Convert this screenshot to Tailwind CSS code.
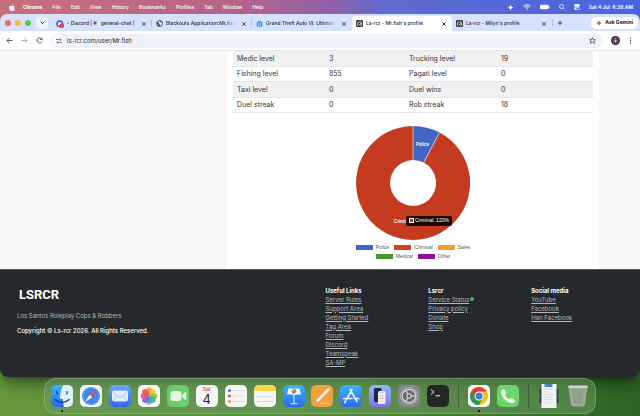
<!DOCTYPE html>
<html lang="en">
<head>
    <meta charset="UTF-8">
    <meta name="viewport" content="width=device-width, initial-scale=1.0">
    <title>Ls-rcr - Mr.fish's profile</title>
    <script src="https://cdn.jsdelivr.net/npm/@tailwindcss/browser@4"></script>
</head>
<body class="min-h-screen bg-linear-to-r from-[#66983a] via-[#4f8c35] to-[#2c6423] font-['Inter',sans-serif] text-[6px] leading-[9px] text-gray-800">

    <!-- Menu bar -->
    <div class="bg-[linear-gradient(80deg,#c8707a_0%,#b4648a_38%,#9061a8_52%,#606bcd_60%,#4a64e4_100%)]">
        <header class="flex h-[14px] items-center justify-between pl-[9px] pr-[7px] text-[5px] text-white">
            <nav class="flex items-center gap-[10px] font-medium">
                <svg class="mr-[-2px] h-[7px] w-[6px]" viewBox="0 0 12 14" fill="currentColor"><path d="M8.800 0c.1 1.500-1.200 3-2.700 3C5.900 1.600 7.300.1 8.800 0zM11.500 10.300c-.8 1.900-1.800 3.400-3 3.400-.9 0-1.200-.5-2.300-.5s-1.400.5-2.300.5C2.200 13.700.2 10.600.2 7.700c0-2.600 1.600-4 3.300-4 1 0 1.900.7 2.600.7.6 0 1.600-.7 2.900-.7.9 0 1.900.5 2.500 1.300-2.200 1.300-1.900 4.300 0 5.300z"/></svg>
                <button class="font-bold">Chrome</button>
                <button>File</button>
                <button>Edit</button>
                <button>View</button>
                <button>History</button>
                <button>Bookmarks</button>
                <button>Profiles</button>
                <button>Tab</button>
                <button>Window</button>
                <button>Help</button>
            </nav>
            <div class="flex items-center gap-[9px] font-semibold">
                <svg class="size-[7px]" viewBox="0 0 14 14" fill="currentColor"><path d="M7 1c.8 3.800 2 5 6 6-4 1-5.200 2.200-6 6-.8-3.800-2-5-6-6 4-1 5.200-2.200 6-6z"/></svg>
                <svg class="h-[6px] w-[8px]" viewBox="0 0 16 12" fill="none" stroke="currentColor" stroke-width="2"><path d="M1 4.500c4-4 10-4 14 0M3.700 7.300c2.500-2.500 6.100-2.500 8.600 0"/><path d="M6 9.500q2-1.600 4 0L8 11.500z" fill="currentColor" stroke="none"/></svg>
                <svg class="h-[6px] w-[10px]" viewBox="0 0 20 12"><rect x="0" y="1.500" width="17.500" height="9" rx="2.500" fill="#fff"/><path d="M18.500 4.500v3" stroke="#fff" stroke-width="1.500"/></svg>
                <svg class="size-[6px]" viewBox="0 0 12 12" fill="none" stroke="currentColor" stroke-width="1.500"><circle cx="5" cy="5" r="4"/><path d="M8 8l3.500 3.500"/></svg>
                <svg class="size-[6px]" viewBox="0 0 12 12" fill="none" stroke="currentColor" stroke-width="1.300"><rect x=".7" y=".7" width="10.600" height="4.300" rx="2.100" fill="currentColor"/><rect x=".7" y="7" width="10.600" height="4.300" rx="2.100"/><circle cx="3" cy="9.100" r="1.300" fill="currentColor"/></svg>
                <span class="whitespace-pre">Sat 4 Jul  8:26 AM</span>
            </div>
        </header>

        <!-- Tab strip -->
        <div class="flex h-[17px] items-center rounded-t-[7px] bg-[#d6e2fb]">
            <div class="flex w-[52px] shrink-0 items-center gap-1 pl-[5px]">
                <span class="size-[6px] rounded-full bg-[#ee6a5f]"></span>
                <span class="size-[6px] rounded-full bg-[#f0bd3e]"></span>
                <span class="size-[6px] rounded-full bg-[#5cc455]"></span>
                <button class="ml-px grid size-[12px] place-items-center rounded-[4px] bg-[#eef3fd]" aria-label="Search tabs">
                    <svg class="size-[5px]" viewBox="0 0 10 10" fill="none" stroke="#1f2937" stroke-width="2"><path d="M1.500 3.500L5 7l3.500-3.500"/></svg>
                </button>
            </div>
            <div class="grid h-full min-w-0 flex-1 grid-cols-5 items-end text-[5px] font-medium">
                <div class="flex h-[15px] min-w-0 items-center gap-[3px] pl-[4px]">
                    <svg class="size-[8px] shrink-0" viewBox="0 0 16 16"><circle cx="7.500" cy="7.500" r="7.200" fill="#4a5ce8"/><path d="M3.500 10c.2-3 1-5 2-5.500h4c1 .5 1.800 2.500 2 5.500-2 1.600-6 1.600-8 0z" fill="#fff"/><circle cx="11.500" cy="11.300" r="4.500" fill="#d8232f"/><path d="M11.500 9v4.500" stroke="#fff" stroke-width="1.200"/></svg>
                    <span class="flex min-w-0 flex-1 items-center overflow-hidden whitespace-nowrap">- Discord | #<i class="size-[4px] shrink-0 rounded-full bg-[#f3ece6]"></i>general-chat |</span>
                    <button class="ml-[2px] shrink-0" aria-label="Close tab"><svg class="size-[6px]" viewBox="0 0 12 12" stroke="#374151" stroke-width="1.800"><path d="M2.500 2.500l7 7M9.500 2.500l-7 7"/></svg></button>
                    <span class="ml-px h-[7px] w-px bg-[#a9c1f0]"></span>
                </div>
                <div class="flex h-[15px] min-w-0 items-center gap-[3px] pl-[4px]">
                    <svg class="size-[7px] shrink-0" viewBox="0 0 14 14"><circle cx="7" cy="7" r="6" fill="none" stroke="#44474d" stroke-width="1.700"/><path d="M2 4c2 2 4 0 4 3s3 1 2 5l-3 .5C3 10 4 8 1.500 7zM7 1.500c0 2 1 3 3 2.500s1 2 3 3V5L10 1.500z" fill="#44474d"/></svg>
                    <span class="min-w-0 flex-1 overflow-hidden whitespace-nowrap mask-r-from-85%">Blackouts Application:Mr.fish</span>
                    <button class="ml-[2px] shrink-0" aria-label="Close tab"><svg class="size-[6px]" viewBox="0 0 12 12" stroke="#374151" stroke-width="1.800"><path d="M2.500 2.500l7 7M9.500 2.500l-7 7"/></svg></button>
                    <span class="ml-px h-[7px] w-px bg-[#a9c1f0]"></span>
                </div>
                <div class="flex h-[15px] min-w-0 items-center gap-[3px] pl-[4px] pr-[5px]">
                    <svg class="size-[7px] shrink-0" viewBox="0 0 14 14"><path d="M4.500 4V2.500h5V4" fill="none" stroke="#3a7fc4" stroke-width="1.400"/><path d="M1.500 4h11v7.500a2 2 0 0 1-2 2h-7a2 2 0 0 1-2-2z" fill="#3c93dc"/><path d="M4.500 6.500h2v2h-2zM7.500 6.500h2v2h-2zM4.500 9.300h2v2h-2zM7.500 9.300h2v2h-2z" fill="#e8f4ff"/></svg>
                    <span class="min-w-0 flex-1 overflow-hidden whitespace-nowrap mask-r-from-85%">Grand Theft Auto VI: Ultimate</span>
                    <button class="ml-[2px] shrink-0" aria-label="Close tab"><svg class="size-[6px]" viewBox="0 0 12 12" stroke="#374151" stroke-width="1.800"><path d="M2.500 2.500l7 7M9.500 2.500l-7 7"/></svg></button>
                </div>
                <div class="flex h-[15px] min-w-0 items-center gap-[3px] rounded-t-[4px] bg-white pl-[4px] pr-[5px]">
                    <svg class="size-[7px] shrink-0" viewBox="0 0 14 14"><rect width="14" height="14" rx="2.500" fill="#3b3e41"/><path d="M3 11V5.500L9.500 3M5.500 11L11 5v5.500H8" fill="none" stroke="#e8ebe8" stroke-width="1.600"/></svg>
                    <span class="min-w-0 flex-1 overflow-hidden whitespace-nowrap">Ls-rcr - Mr.fish's profile</span>
                    <button class="ml-[2px] shrink-0" aria-label="Close tab"><svg class="size-[6px]" viewBox="0 0 12 12" stroke="#1f2937" stroke-width="1.800"><path d="M2.500 2.500l7 7M9.500 2.500l-7 7"/></svg></button>
                </div>
                <div class="flex h-[15px] min-w-0 items-center gap-[3px] pl-[4px] pr-[5px]">
                    <svg class="size-[7px] shrink-0" viewBox="0 0 14 14"><rect width="14" height="14" rx="2.500" fill="#3b3e41"/><path d="M3 11V5.500L9.500 3M5.500 11L11 5v5.500H8" fill="none" stroke="#e8ebe8" stroke-width="1.600"/></svg>
                    <span class="min-w-0 flex-1 overflow-hidden whitespace-nowrap">Ls-rcr - Milyn's profile</span>
                    <button class="ml-[2px] shrink-0" aria-label="Close tab"><svg class="size-[6px]" viewBox="0 0 12 12" stroke="#374151" stroke-width="1.800"><path d="M2.500 2.500l7 7M9.500 2.500l-7 7"/></svg></button>
                </div>
            </div>
            <div class="flex w-[88px] shrink-0 items-center justify-between pr-[2px]">
                <div class="flex items-center gap-1">
                    <span class="h-[7px] w-px bg-[#a9c1f0]"></span>
                    <button aria-label="New tab"><svg class="block size-[6px]" viewBox="0 0 12 12" stroke="#374151" stroke-width="1.800"><path d="M6 1.500v9M1.500 6h9"/></svg></button>
                </div>
                <button class="flex h-[12px] items-center gap-[3px] rounded-[5px] bg-white px-[5px] text-[5px] font-bold text-gray-900">
                    <svg class="size-[6px]" viewBox="0 0 12 12"><path d="M6 0c.7 3 2 4.500 6 6H6z" fill="#4285f4"/><path d="M12 6c-4 1.500-5.300 3-6 6V6z" fill="#4285f4"/><path d="M6 12C5.300 9 4 7.500 0 6h6z" fill="#34a853"/><path d="M0 6c4-1.500 5.300-3 6-6v6z" fill="#ea4335"/><path d="M0 6l3-1.500L5 6 3 7.500z" fill="#fbbc04"/></svg>
                    Ask Gemini
                </button>
            </div>
        </div>
    </div>

    <!-- Toolbar -->
    <div class="flex h-[20px] items-center gap-[8px] border-b border-gray-200 bg-white pl-[6px] pr-[7px]">
        <button aria-label="Back"><svg class="block size-[7px]" viewBox="0 0 14 14" fill="none" stroke="#374151" stroke-width="1.700"><path d="M13 7H2M7 2L2 7l5 5"/></svg></button>
        <button aria-label="Forward"><svg class="block size-[7px]" viewBox="0 0 14 14" fill="none" stroke="#a3a7ad" stroke-width="1.700"><path d="M1 7h11M7 2l5 5-5 5"/></svg></button>
        <button aria-label="Reload"><svg class="block size-[7px]" viewBox="0 0 14 14" fill="none" stroke="#374151" stroke-width="1.700"><path d="M12 8.500A5.200 5.200 0 1 1 11 3.500M12 1v4H8"/></svg></button>
        <div class="flex h-[14px] flex-1 items-center gap-[3px] rounded-full bg-[#edf1fa] pl-[2px] pr-[7px]">
            <span class="grid size-[11px] place-items-center rounded-full bg-white">
                <svg class="size-[6px]" viewBox="0 0 12 12" fill="none" stroke="#374151" stroke-width="1.500"><path d="M0 3h5M7 9h5"/><circle cx="8.500" cy="3" r="1.700"/><circle cx="3.500" cy="9" r="1.700"/></svg>
            </span>
            <input type="text" value="ls-rcr.com/user/Mr.fish" aria-label="Address" class="min-w-0 flex-1 bg-transparent text-[6px] text-gray-800 outline-none">
            <button aria-label="Bookmark"><svg class="block size-[7px]" viewBox="0 0 14 14" fill="none" stroke="#374151" stroke-width="1.500"><path d="M7 1.200l1.700 3.900 4.300.4-3.200 2.800.9 4.200L7 10.300l-3.700 2.200.9-4.200L1 5.500l4.300-.4z"/></svg></button>
        </div>
        <button aria-label="Profile"><svg class="block size-[9px]" viewBox="0 0 18 18"><circle cx="9" cy="9" r="9" fill="#35305e"/><circle cx="9" cy="9" r="5.500" fill="#c98a86"/><path d="M3.500 5h4l1.500 3 1.500-3h4l-2 9H5.500z" fill="#6b3144"/><path d="M7 8h4l-1 5H8z" fill="#e8c8c0"/></svg></button>
        <button aria-label="Menu"><svg class="block h-[7px] w-[5px]" viewBox="0 0 10 14" fill="#374151"><circle cx="5" cy="2" r="1.300"/><circle cx="5" cy="7" r="1.300"/><circle cx="5" cy="12" r="1.300"/></svg></button>
    </div>

    <!-- Profile page -->
    <main class="grid grid-cols-[227px_1fr_41px] bg-[#f8f8f8]">
        <section class="col-start-2 bg-white px-[6px] pb-[8px]">
            <table class="w-full table-fixed border-collapse text-left text-[7px] leading-[9px] text-[#30343a]">
                <colgroup><col class="w-[92px]"><col class="w-[80px]"><col class="w-[92px]"><col></colgroup>
                <tbody>
                    <tr class="h-[15px] border-b border-gray-200 bg-[#f1f1f1]">
                        <th class="pl-1 font-normal" scope="row">Medic level</th><td class="pl-1">3</td>
                        <th class="pl-1 font-normal" scope="row">Trucking level</th><td class="pl-1">19</td>
                    </tr>
                    <tr class="h-[15px] border-b border-gray-200">
                        <th class="pl-1 font-normal" scope="row">Fishing level</th><td class="pl-1">855</td>
                        <th class="pl-1 font-normal" scope="row">Pagati level</th><td class="pl-1">0</td>
                    </tr>
                    <tr class="h-[16px] border-b border-gray-200 bg-[#f1f1f1]">
                        <th class="pl-1 font-normal" scope="row">Taxi level</th><td class="pl-1">0</td>
                        <th class="pl-1 font-normal" scope="row">Duel wins</th><td class="pl-1">0</td>
                    </tr>
                    <tr class="h-[15px] border-b border-gray-200">
                        <th class="pl-1 font-normal" scope="row">Duel streak</th><td class="pl-1">0</td>
                        <th class="pl-1 font-normal" scope="row">Rob streak</th><td class="pl-1">18</td>
                    </tr>
                </tbody>
            </table>

            <!-- Job chart -->
            <div class="relative mx-auto mt-[13px] w-[114px] font-['Liberation_Sans',sans-serif] text-[5px] leading-[9px]">
                <svg class="block size-[114px]" viewBox="-57 -57 114 114">
                    <path d="M26.500-50.500A57 57 0 1 1 0-57V-23A23 23 0 1 0 10.700-20.400z" fill="#c53b1f"/>
                    <path d="M0-57A57 57 0 0 1 26.500-50.500L10.700-20.400A23 23 0 0 0 0-23z" fill="#4166c5"/>
                    <path d="M0-57V-23M26.500-50.500L10.700-20.400" stroke="#e3d3d8" stroke-width=".8"/>
                    <g fill="#fff" stroke="#fff" stroke-width=".1" font-size="5" text-anchor="middle">
                        <text x="9.500" y="-37">Police</text>
                        <text x="-10" y="40">Criminal</text>
                    </g>
                </svg>
                <div class="absolute left-[50px] top-[90px] flex h-[10px] items-center gap-px whitespace-nowrap rounded-[2px] bg-[#1a0805] px-[3px] text-white">
                    <span class="size-[5px] border border-white bg-[#c53b1f]"></span>Criminal: 120%
                </div>
            </div>
            <ul class="mx-auto mt-[3px] flex w-[124px] flex-wrap justify-center gap-x-[5px] font-['Liberation_Sans',sans-serif] text-[5px] leading-[9px] text-[#555]">
                <li class="flex items-center gap-[3px]"><span class="h-[5px] w-[17px] bg-[#4166c5]"></span>Police</li>
                <li class="flex items-center gap-[3px]"><span class="h-[5px] w-[17px] bg-[#cc4528]"></span>Criminal</li>
                <li class="flex items-center gap-[3px]"><span class="h-[5px] w-[17px] bg-[#ef9f38]"></span>Sales</li>
                <li class="flex items-center gap-[3px]"><span class="h-[5px] w-[17px] bg-[#44962d]"></span>Medical</li>
                <li class="flex items-center gap-[3px]"><span class="h-[5px] w-[17px] bg-[#8c1596]"></span>Other</li>
            </ul>
        </section>
    </main>

    <!-- Site footer -->
    <footer class="grid grid-cols-[3fr_1fr_1fr_1fr] rounded-b-[8px] border-t border-[#50555a] bg-[#25292e] pb-[10px] pl-[17px] pr-[6px] pt-[16px] text-[#b4b7ba] shadow-lg shadow-black/40">
        <div>
            <div class="pl-[2px] pt-[2px] font-['Roboto',sans-serif] text-[13px] font-bold leading-[14px] text-white">LSRCR</div>
            <p class="mt-[9px]">Los Santos Roleplay Cops &amp; Robbers</p>
            <p class="mt-[6px] font-medium text-white">Copyright © Ls-rcr 2026. All Rights Reserved.</p>
        </div>
        <div class="flex flex-col items-start">
            <h2 class="font-bold text-white">Useful Links</h2>
            <a href="#" class="underline">Server Rules</a>
            <a href="#" class="underline">Support Area</a>
            <a href="#" class="underline">Getting Started</a>
            <a href="#" class="underline">Tag Area</a>
            <a href="#" class="underline">Forum</a>
            <a href="#" class="underline">Discord</a>
            <a href="#" class="underline">Teamspeak</a>
            <a href="#" class="underline">SA-MP</a>
        </div>
        <div class="flex flex-col items-start">
            <h2 class="font-bold text-white">Lsrcr</h2>
            <a href="#" class="flex items-center gap-px underline">Service Status <span class="size-[4px] rounded-full bg-[#48b461]"></span></a>
            <a href="#" class="underline">Privacy policy</a>
            <a href="#" class="underline">Donate</a>
            <a href="#" class="underline">Shop</a>
        </div>
        <div class="flex flex-col items-start">
            <h2 class="font-bold text-white">Social media</h2>
            <a href="#" class="underline">YouTube</a>
            <a href="#" class="underline">Facebook</a>
            <a href="#" class="underline">Han Facebook</a>
        </div>
    </footer>

    <!-- Dock -->
    <div class="mx-auto mt-px flex h-[36px] max-w-[552px] items-center justify-between rounded-[12px] border border-white/20 bg-[#6f9a68]/50 px-[6px]">
        <button class="relative" aria-label="Finder">
            <svg class="block size-[22px]" viewBox="0 0 44 44"><defs><linearGradient id="sky" x2="0" y2="1"><stop stop-color="#38b4fb"/><stop offset="1" stop-color="#2a6af0"/></linearGradient></defs><rect width="44" height="44" rx="10" fill="url(#sky)"/><path d="M25 0h9a10 10 0 0 1 10 10v24a10 10 0 0 1-10 10h-8c-1-5-2-10-2-16h-6C18 17 20 8 25 0z" fill="#dff0fc"/><path d="M12 13v5M32 13v5M8 29c8 8 20 8 28 0" fill="none" stroke="#15375e" stroke-width="2.400" stroke-linecap="round"/></svg>
            <span class="absolute -bottom-[5px] left-[10px] size-[2px] rounded-full bg-black"></span>
        </button>
        <button aria-label="Safari">
            <svg class="block size-[22px]" viewBox="0 0 44 44"><rect width="44" height="44" rx="10" fill="#f1f4f7"/><circle cx="22" cy="22" r="18" fill="#3f8ae8"/><circle cx="22" cy="22" r="15.500" fill="none" stroke="#a9d3fb" stroke-width="2" stroke-dasharray="1 3"/><path d="M34 10L24.500 24.500l-5-5z" fill="#f0453a"/><path d="M10 34l9.500-14.500 5 5z" fill="#f4f6f8"/></svg>
        </button>
        <button aria-label="Mail">
            <svg class="block size-[22px]" viewBox="0 0 44 44"><defs><linearGradient id="mail" x2="0" y2="1"><stop stop-color="#6aa8f6"/><stop offset="1" stop-color="#3168ee"/></linearGradient></defs><rect width="44" height="44" rx="10" fill="url(#mail)"/><rect x="6" y="11" width="32" height="22" rx="4" fill="#e4eefb"/><path d="M7 13l13 11q2 1.500 4 0l13-11M7 32l10-10M37 32L27 22" fill="none" stroke="#8fb2e0" stroke-width="1.600"/></svg>
        </button>
        <button aria-label="Photos">
            <svg class="block size-[22px]" viewBox="0 0 44 44"><rect width="44" height="44" rx="10" fill="#f6f6f5"/><g fill-opacity=".9"><ellipse cx="22" cy="13" rx="6" ry="8" fill="#f49b2c"/><ellipse cx="22" cy="13" rx="6" ry="8" fill="#e8cf35" transform="rotate(45 22 22)"/><ellipse cx="22" cy="13" rx="6" ry="8" fill="#9cc53f" transform="rotate(90 22 22)"/><ellipse cx="22" cy="13" rx="6" ry="8" fill="#4fb583" transform="rotate(135 22 22)"/><ellipse cx="22" cy="13" rx="6" ry="8" fill="#4c9de0" transform="rotate(180 22 22)"/><ellipse cx="22" cy="13" rx="6" ry="8" fill="#7767c4" transform="rotate(225 22 22)"/><ellipse cx="22" cy="13" rx="6" ry="8" fill="#c65da8" transform="rotate(270 22 22)"/><ellipse cx="22" cy="13" rx="6" ry="8" fill="#ea5546" transform="rotate(315 22 22)"/></g></svg>
        </button>
        <button aria-label="FaceTime">
            <svg class="block size-[22px]" viewBox="0 0 44 44"><rect width="44" height="44" rx="10" fill="#68cf68"/><rect x="7" y="12" width="22" height="20" rx="5" fill="#e4f7e2"/><path d="M31 19l6-5q1.500-.8 1.500 1v14q0 1.800-1.500 1l-6-5z" fill="#e4f7e2"/></svg>
        </button>
        <button class="flex size-[22px] flex-col items-center rounded-[5px] bg-[#f6f6f6] pt-[2px]">
            <span class="text-[5px] font-semibold leading-[5px] text-[#ec4b40]">Sat</span>
            <span class="text-[13px] leading-[14px] text-[#26282a]">4</span>
        </button>
        <button aria-label="Reminders">
            <svg class="block size-[22px]" viewBox="0 0 44 44"><rect width="44" height="44" rx="10" fill="#f6f6f6"/><circle cx="9" cy="11" r="3" fill="#2f78ee"/><circle cx="9" cy="22" r="3" fill="#e7523c"/><circle cx="9" cy="33" r="3" fill="#f0953a"/><path d="M16 11h22M16 22h22M16 33h22" stroke="#d4d5d6" stroke-width="1.600"/></svg>
        </button>
        <button aria-label="Notes">
            <svg class="block size-[22px]" viewBox="0 0 44 44"><rect width="44" height="44" rx="10" fill="#f5f5f3"/><path d="M0 12v-2A10 10 0 0 1 10 0h24a10 10 0 0 1 10 10v2z" fill="#fbd54b"/><path d="M6 23h32M6 33h32" stroke="#d4d4d2" stroke-width="1.600"/></svg>
        </button>
        <button aria-label="Keynote">
            <svg class="block size-[22px]" viewBox="0 0 44 44"><rect width="44" height="44" rx="10" fill="url(#sky)"/><path d="M22 18v19M15 37.500h14" stroke="#dbe7f2" stroke-width="2.400"/><path d="M11 7h22l3 12H8z" fill="#f2f7fc"/><circle cx="22" cy="12.500" r="4.500" fill="#58b86a"/><path d="M22 12.500V8a4.500 4.500 0 0 1 4.500 4.500z" fill="#ee6a3e"/><path d="M22 12.500h-4.500A4.500 4.500 0 0 1 22 8z" fill="#f2bd3b"/><path d="M22 12.500V17a4.500 4.500 0 0 1-4.500-4.500z" fill="#8863c5"/></svg>
        </button>
        <button aria-label="Pages">
            <svg class="block size-[22px]" viewBox="0 0 44 44"><rect width="44" height="44" rx="10" fill="#f3a043"/><path d="M18 36.500h18" stroke="#fbd3a4" stroke-width="1.800"/><path d="M8 36l3-6L32 8q3-2 4.500 0 1 1.500-1 4L14 34z" fill="#fbf4ea"/><path d="M8 36l2-4 2 2z" fill="#7d6a55"/></svg>
        </button>
        <button aria-label="App Store">
            <svg class="block size-[22px]" viewBox="0 0 44 44"><rect width="44" height="44" rx="10" fill="url(#sky)"/><path d="M24 9L13 29M20 9l14 24M7 27h17M29 27h8M11 32l-1.500 3" fill="none" stroke="#e9f4ff" stroke-width="3.400" stroke-linecap="round"/></svg>
        </button>
        <button aria-label="iPhone Mirroring">
            <svg class="block size-[22px]" viewBox="0 0 44 44"><defs><linearGradient id="mirror" x2="0" y2="1"><stop stop-color="#8fbcf7"/><stop offset="1" stop-color="#8072e8"/></linearGradient></defs><rect width="44" height="44" rx="10" fill="url(#mirror)"/><rect x="10" y="6" width="15" height="28" rx="3" fill="#1e2747"/><rect x="18" y="12" width="15" height="26" rx="3" fill="#eceef3"/><path d="M22 15h7M21 22h9M21 27h9" stroke="#b5b8c4" stroke-width="1.600"/></svg>
        </button>
        <button aria-label="System Settings">
            <svg class="block size-[22px]" viewBox="0 0 44 44"><rect width="44" height="44" rx="10" fill="#85878a"/><circle cx="22" cy="22" r="17" fill="none" stroke="#d6d7d8" stroke-width="2" stroke-dasharray="2 1.500"/><circle cx="22" cy="22" r="13.500" fill="#68696c" stroke="#d6d7d8" stroke-width="2.500"/><path d="M22 22h13M22 22l-6.500-11.300M22 22l-6.500 11.300" stroke="#d6d7d8" stroke-width="2.500"/><circle cx="22" cy="22" r="4.500" fill="#68696c" stroke="#d6d7d8" stroke-width="2.200"/></svg>
        </button>
        <button aria-label="Terminal">
            <svg class="block size-[22px]" viewBox="0 0 44 44"><rect width="44" height="44" rx="10" fill="#252627"/><path d="M8 9l6 5-6 5M17 21.500h9" fill="none" stroke="#f0f0f0" stroke-width="2"/></svg>
        </button>
        <span class="mx-[2px] h-[26px] w-px bg-black/25"></span>
        <button class="relative" aria-label="Chrome">
            <svg class="block size-[22px]" viewBox="0 0 44 44"><rect width="44" height="44" rx="10" fill="#fafafa"/><path d="M22 22L6.400 13A18 18 0 0 1 37.600 13z" fill="#e33b2e"/><path d="M22 22L37.600 13A18 18 0 0 1 22 40z" fill="#fbc116"/><path d="M22 22v18A18 18 0 0 1 6.400 13z" fill="#2da04e"/><path d="M22 13h15.600L30 26z" fill="#fbc116"/><path d="M14 26.500L6.400 13 22 13z" fill="#e33b2e"/><path d="M14.200 26.500L6.400 13A18 18 0 0 0 22 40l8-13.500z" fill="#2da04e"/><circle cx="22" cy="22" r="9" fill="#fafafa"/><circle cx="22" cy="22" r="7" fill="#3a7be8"/></svg>
            <span class="absolute -bottom-[5px] left-[10px] size-[2px] rounded-full bg-black"></span>
        </button>
        <button aria-label="Phone">
            <svg class="block size-[22px]" viewBox="0 0 44 44"><rect width="44" height="44" rx="10" fill="#6bd569"/><path d="M11 9q3-2 4.500.5l3 6q.8 2-1 3.500l-1.500 1.500q3 5.500 8 8l1.800-1.700q1.500-1.500 3.500-.5l5.500 3.200q2 1.500.5 4c-2 3-5 3.600-8.500 2.500C18 33 10.500 25 8.500 17c-.8-3.500 0-6.500 2.500-8z" fill="#f2fbf1"/></svg>
        </button>
        <span class="mx-[2px] h-[26px] w-px bg-black/25"></span>
        <button aria-label="Downloads">
            <svg class="block h-[26px] w-[22px]" viewBox="0 0 44 52"><path d="M3 12h38v9l-2 5 2 5v9H3v-9l2-5-2-5z" fill="#353a52"/><rect x="7" y="2" width="30" height="48" fill="#f2f3f4"/><path d="M13 2h16v6H13z" fill="#4c86cf"/><path d="M11 13h22M11 18h12M11 23h22M11 28h16M11 33h20M11 40h14" stroke="#c9ccd1" stroke-width="1.200"/></svg>
        </button>
        <button aria-label="Trash">
            <svg class="block size-[22px]" viewBox="0 0 44 44"><path d="M3 3h38l-5 36q-.6 4-5 4H13q-4.400 0-5-4z" fill="#a9b8a8" fill-opacity=".85"/><path d="M9 8h26l-4 30H13z" fill="#8a9a88" fill-opacity=".7"/><rect x="2" y="1" width="40" height="5" rx="2.500" fill="#cbd6c9"/></svg>
        </button>
    </div>
</body>
</html>
